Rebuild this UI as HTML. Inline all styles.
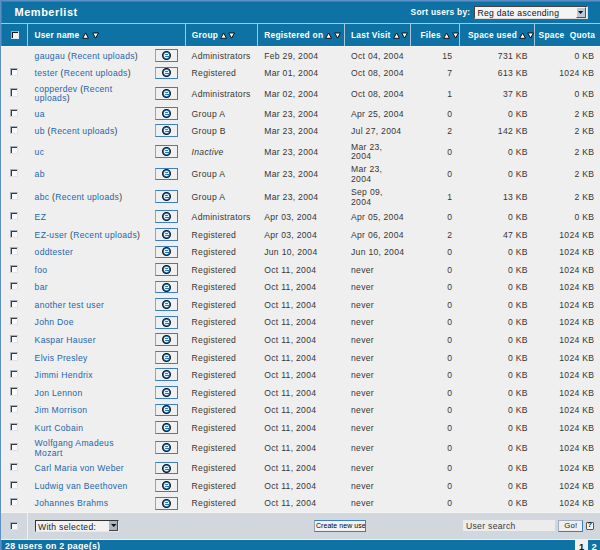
<!DOCTYPE html>
<html><head><meta charset="utf-8"><style>
html,body{margin:0;padding:0;width:600px;height:550px;overflow:hidden;background:#efefef;position:relative}
body{font-family:"Liberation Sans",sans-serif;}
div,svg{position:absolute}
.t{font-size:8.6px;line-height:9.8px;color:#363636;white-space:nowrap;letter-spacing:0.3px}
.l{font-size:8.6px;line-height:9.8px;color:#2465ab;white-space:nowrap;letter-spacing:0.3px}
.l .p{color:#363636}
.h{font-size:8.4px;line-height:9.8px;color:#fff;font-weight:bold;white-space:nowrap;letter-spacing:0.25px}
.eb{left:154.75px;width:21.25px;height:10.75px;border:1px solid #3d7dc3;border-left-color:#8ea6be;background:#f0f0f0}
.cb{width:6px;height:6.2px;border-top:1px solid #a2b0c0;border-left:1px solid #a2b0c0;border-right:0.8px solid #dfe3e8;border-bottom:0.8px solid #dfe3e8;background:#fbfbfb;box-shadow:inset 1px 1px 0 #3a3a3a}
</style></head><body>
<div style="left:0;top:0;width:600px;height:550px;background:#efefef"></div>
<div style="left:0;top:0;width:600px;height:24px;background:#0e72a4"></div>
<div style="left:0;top:0;width:600px;height:1px;background:#5b8fc6"></div>
<div style="left:0;top:1px;width:600px;height:1px;background:#3a80b8"></div>
<div class="h" style="left:14.6px;top:5.6px;font-size:11px;line-height:13px;letter-spacing:0.5px">Memberlist</div>
<div class="h" style="left:410.6px;top:7.5px">Sort users by:</div>
<div style="left:474.2px;top:6px;width:111.8px;height:11px;background:#f4f4f4;border-top:1px solid #444;border-left:1px solid #444;border-right:1px solid #ddd;border-bottom:1px solid #ddd"></div>
<div class="t" style="left:477.4px;top:8.7px;color:#111">Reg date ascending</div>
<div style="left:575.6px;top:7px;width:8.4px;height:8.8px;background:#bcc8d4;border-left:0.8px solid #f4f4f4;border-top:0.8px solid #f4f4f4;border-right:1.2px solid #555;border-bottom:1.2px solid #555"></div>
<svg style="left:577.9px;top:10.5px" width="6" height="4" viewBox="0 0 6 4"><polygon points="0,0 5.2,0 2.6,3" fill="#111"/></svg>
<div style="left:0;top:23px;width:600px;height:23px;background:#0e72a4"></div>
<div style="left:1px;top:23.2px;width:599px;height:1px;background:#a9c5dc"></div>
<div style="left:1px;top:45.7px;width:599px;height:1px;background:#f6f6f6"></div>
<div style="left:26.50px;top:24px;width:1px;height:21.8px;background:#a9c5dc"></div>
<div style="left:184.50px;top:24px;width:1px;height:21.8px;background:#a9c5dc"></div>
<div style="left:257.00px;top:24px;width:1px;height:21.8px;background:#a9c5dc"></div>
<div style="left:344.00px;top:24px;width:1px;height:21.8px;background:#a9c5dc"></div>
<div style="left:410.00px;top:24px;width:1px;height:21.8px;background:#a9c5dc"></div>
<div style="left:459.00px;top:24px;width:1px;height:21.8px;background:#a9c5dc"></div>
<div style="left:534.20px;top:24px;width:1px;height:21.8px;background:#a9c5dc"></div>
<div style="left:10.5px;top:30.8px;width:6.7px;height:6.6px;background:#f2f2f2;border-top:1px solid #8fb0cc;border-left:1px solid #8fb0cc;border-right:0.8px solid #e4e8ec;border-bottom:0.8px solid #e4e8ec;box-shadow:inset 1px 1px 0 #1c1c1c"></div>
<div class="h" style="left:34.40px;top:30.90px">User name</div>
<svg style="left:82.40px;top:32.4px" width="7.2" height="7.2" viewBox="0 0 7.2 7.2"><polygon points="3.6,1 6.5,6.3 0.7,6.3" fill="#fff" stroke="#111" stroke-width="1"/></svg>
<svg style="left:91.70px;top:31.6px" width="7.2" height="7.2" viewBox="0 0 7.2 7.2"><polygon points="0.7,1 6.5,1 3.6,6.1" fill="#fff" stroke="#111" stroke-width="1"/></svg>
<div class="h" style="left:191.80px;top:30.90px">Group</div>
<svg style="left:219.70px;top:32.4px" width="7.2" height="7.2" viewBox="0 0 7.2 7.2"><polygon points="3.6,1 6.5,6.3 0.7,6.3" fill="#fff" stroke="#111" stroke-width="1"/></svg>
<svg style="left:228.40px;top:31.6px" width="7.2" height="7.2" viewBox="0 0 7.2 7.2"><polygon points="0.7,1 6.5,1 3.6,6.1" fill="#fff" stroke="#111" stroke-width="1"/></svg>
<div class="h" style="left:264.20px;top:30.90px">Registered on</div>
<svg style="left:325.40px;top:32.4px" width="7.2" height="7.2" viewBox="0 0 7.2 7.2"><polygon points="3.6,1 6.5,6.3 0.7,6.3" fill="#fff" stroke="#111" stroke-width="1"/></svg>
<svg style="left:334.40px;top:31.6px" width="7.2" height="7.2" viewBox="0 0 7.2 7.2"><polygon points="0.7,1 6.5,1 3.6,6.1" fill="#fff" stroke="#111" stroke-width="1"/></svg>
<div class="h" style="left:351.00px;top:30.90px">Last Visit</div>
<svg style="left:392.50px;top:32.4px" width="7.2" height="7.2" viewBox="0 0 7.2 7.2"><polygon points="3.6,1 6.5,6.3 0.7,6.3" fill="#fff" stroke="#111" stroke-width="1"/></svg>
<svg style="left:401.40px;top:31.6px" width="7.2" height="7.2" viewBox="0 0 7.2 7.2"><polygon points="0.7,1 6.5,1 3.6,6.1" fill="#fff" stroke="#111" stroke-width="1"/></svg>
<div class="h" style="left:420.50px;top:30.90px">Files</div>
<svg style="left:442.80px;top:32.4px" width="7.2" height="7.2" viewBox="0 0 7.2 7.2"><polygon points="3.6,1 6.5,6.3 0.7,6.3" fill="#fff" stroke="#111" stroke-width="1"/></svg>
<svg style="left:451.50px;top:31.6px" width="7.2" height="7.2" viewBox="0 0 7.2 7.2"><polygon points="0.7,1 6.5,1 3.6,6.1" fill="#fff" stroke="#111" stroke-width="1"/></svg>
<div class="h" style="left:468.00px;top:30.90px">Space used</div>
<svg style="left:518.70px;top:32.4px" width="7.2" height="7.2" viewBox="0 0 7.2 7.2"><polygon points="3.6,1 6.5,6.3 0.7,6.3" fill="#fff" stroke="#111" stroke-width="1"/></svg>
<svg style="left:526.70px;top:31.6px" width="7.2" height="7.2" viewBox="0 0 7.2 7.2"><polygon points="0.7,1 6.5,1 3.6,6.1" fill="#fff" stroke="#111" stroke-width="1"/></svg>
<div class="h" style="left:538.60px;top:30.90px">Space&nbsp;&nbsp;Quota</div>
<div class="l" style="left:34.60px;top:51.80px;">gaugau <span class="p">(</span>Recent uploads<span class="p">)</span></div>
<div class="eb" style="top:49.10px"></div>
<svg style="left:161px;top:50px" width="11" height="11" viewBox="0 0 11 11"><circle cx="5.5" cy="5.5" r="3.95" fill="#1a7ac4" stroke="#0d1824" stroke-width="1.1"/><ellipse cx="5.5" cy="5.5" rx="2.6" ry="2.8" fill="#eef4fa"/><rect x="4.1" y="4" width="2.8" height="1" fill="#2273b8"/><rect x="4.1" y="6" width="4.4" height="1" fill="#2273b8"/></svg>
<div class="t" style="left:191.60px;top:51.80px;">Administrators</div>
<div class="t" style="left:264.20px;top:51.80px;">Feb 29, 2004</div>
<div class="t" style="left:351.00px;top:51.80px;">Oct 04, 2004</div>
<div class="t" style="right:147.70px;top:51.80px;text-align:right;">15</div>
<div class="t" style="right:72.20px;top:51.80px;text-align:right;">731 KB</div>
<div class="t" style="right:5.70px;top:51.80px;text-align:right;">0 KB</div>
<div class="cb" style="left:10.1px;top:68.00px"></div>
<div class="l" style="left:34.60px;top:69.20px;">tester <span class="p">(</span>Recent uploads<span class="p">)</span></div>
<div class="eb" style="top:66.50px"></div>
<svg style="left:161px;top:67px" width="11" height="11" viewBox="0 0 11 11"><circle cx="5.5" cy="5.5" r="3.95" fill="#1a7ac4" stroke="#0d1824" stroke-width="1.1"/><ellipse cx="5.5" cy="5.5" rx="2.6" ry="2.8" fill="#eef4fa"/><rect x="4.1" y="4" width="2.8" height="1" fill="#2273b8"/><rect x="4.1" y="6" width="4.4" height="1" fill="#2273b8"/></svg>
<div class="t" style="left:191.60px;top:69.20px;">Registered</div>
<div class="t" style="left:264.20px;top:69.20px;">Mar 01, 2004</div>
<div class="t" style="left:351.00px;top:69.20px;">Oct 08, 2004</div>
<div class="t" style="right:147.70px;top:69.20px;text-align:right;">7</div>
<div class="t" style="right:72.20px;top:69.20px;text-align:right;">613 KB</div>
<div class="t" style="right:5.70px;top:69.20px;text-align:right;">1024 KB</div>
<div class="cb" style="left:10.1px;top:88.40px"></div>
<div class="l" style="left:34.60px;top:84.70px;">copperdev <span class="p">(</span>Recent<br>uploads<span class="p">)</span></div>
<div class="eb" style="top:86.90px"></div>
<svg style="left:161px;top:88px" width="11" height="11" viewBox="0 0 11 11"><circle cx="5.5" cy="5.5" r="3.95" fill="#1a7ac4" stroke="#0d1824" stroke-width="1.1"/><ellipse cx="5.5" cy="5.5" rx="2.6" ry="2.8" fill="#eef4fa"/><rect x="4.1" y="4" width="2.8" height="1" fill="#2273b8"/><rect x="4.1" y="6" width="4.4" height="1" fill="#2273b8"/></svg>
<div class="t" style="left:191.60px;top:89.60px;">Administrators</div>
<div class="t" style="left:264.20px;top:89.60px;">Mar 02, 2004</div>
<div class="t" style="left:351.00px;top:89.60px;">Oct 08, 2004</div>
<div class="t" style="right:147.70px;top:89.60px;text-align:right;">1</div>
<div class="t" style="right:72.20px;top:89.60px;text-align:right;">37 KB</div>
<div class="t" style="right:5.70px;top:89.60px;text-align:right;">0 KB</div>
<div class="cb" style="left:10.1px;top:108.60px"></div>
<div class="l" style="left:34.60px;top:109.80px;">ua</div>
<div class="eb" style="top:107.10px"></div>
<svg style="left:161px;top:108px" width="11" height="11" viewBox="0 0 11 11"><circle cx="5.5" cy="5.5" r="3.95" fill="#1a7ac4" stroke="#0d1824" stroke-width="1.1"/><ellipse cx="5.5" cy="5.5" rx="2.6" ry="2.8" fill="#eef4fa"/><rect x="4.1" y="4" width="2.8" height="1" fill="#2273b8"/><rect x="4.1" y="6" width="4.4" height="1" fill="#2273b8"/></svg>
<div class="t" style="left:191.60px;top:109.80px;">Group A</div>
<div class="t" style="left:264.20px;top:109.80px;">Mar 23, 2004</div>
<div class="t" style="left:351.00px;top:109.80px;">Apr 25, 2004</div>
<div class="t" style="right:147.70px;top:109.80px;text-align:right;">0</div>
<div class="t" style="right:72.20px;top:109.80px;text-align:right;">0 KB</div>
<div class="t" style="right:5.70px;top:109.80px;text-align:right;">2 KB</div>
<div class="cb" style="left:10.1px;top:125.90px"></div>
<div class="l" style="left:34.60px;top:127.10px;">ub <span class="p">(</span>Recent uploads<span class="p">)</span></div>
<div class="eb" style="top:124.40px"></div>
<svg style="left:161px;top:125px" width="11" height="11" viewBox="0 0 11 11"><circle cx="5.5" cy="5.5" r="3.95" fill="#1a7ac4" stroke="#0d1824" stroke-width="1.1"/><ellipse cx="5.5" cy="5.5" rx="2.6" ry="2.8" fill="#eef4fa"/><rect x="4.1" y="4" width="2.8" height="1" fill="#2273b8"/><rect x="4.1" y="6" width="4.4" height="1" fill="#2273b8"/></svg>
<div class="t" style="left:191.60px;top:127.10px;">Group B</div>
<div class="t" style="left:264.20px;top:127.10px;">Mar 23, 2004</div>
<div class="t" style="left:351.00px;top:127.10px;">Jul 27, 2004</div>
<div class="t" style="right:147.70px;top:127.10px;text-align:right;">2</div>
<div class="t" style="right:72.20px;top:127.10px;text-align:right;">142 KB</div>
<div class="t" style="right:5.70px;top:127.10px;text-align:right;">2 KB</div>
<div class="cb" style="left:10.1px;top:146.30px"></div>
<div class="l" style="left:34.60px;top:147.50px;">uc</div>
<div class="eb" style="top:144.80px"></div>
<svg style="left:161px;top:146px" width="11" height="11" viewBox="0 0 11 11"><circle cx="5.5" cy="5.5" r="3.95" fill="#1a7ac4" stroke="#0d1824" stroke-width="1.1"/><ellipse cx="5.5" cy="5.5" rx="2.6" ry="2.8" fill="#eef4fa"/><rect x="4.1" y="4" width="2.8" height="1" fill="#2273b8"/><rect x="4.1" y="6" width="4.4" height="1" fill="#2273b8"/></svg>
<div class="t" style="left:191.60px;top:147.50px;"><i>Inactive</i></div>
<div class="t" style="left:264.20px;top:147.50px;">Mar 23, 2004</div>
<div class="t" style="left:351.00px;top:142.60px;">Mar 23,<br>2004</div>
<div class="t" style="right:147.70px;top:147.50px;text-align:right;">0</div>
<div class="t" style="right:72.20px;top:147.50px;text-align:right;">0 KB</div>
<div class="t" style="right:5.70px;top:147.50px;text-align:right;">2 KB</div>
<div class="cb" style="left:10.1px;top:169.00px"></div>
<div class="l" style="left:34.60px;top:170.20px;">ab</div>
<div class="eb" style="top:167.50px"></div>
<svg style="left:161px;top:168px" width="11" height="11" viewBox="0 0 11 11"><circle cx="5.5" cy="5.5" r="3.95" fill="#1a7ac4" stroke="#0d1824" stroke-width="1.1"/><ellipse cx="5.5" cy="5.5" rx="2.6" ry="2.8" fill="#eef4fa"/><rect x="4.1" y="4" width="2.8" height="1" fill="#2273b8"/><rect x="4.1" y="6" width="4.4" height="1" fill="#2273b8"/></svg>
<div class="t" style="left:191.60px;top:170.20px;">Group A</div>
<div class="t" style="left:264.20px;top:170.20px;">Mar 23, 2004</div>
<div class="t" style="left:351.00px;top:165.30px;">Mar 23,<br>2004</div>
<div class="t" style="right:147.70px;top:170.20px;text-align:right;">0</div>
<div class="t" style="right:72.20px;top:170.20px;text-align:right;">0 KB</div>
<div class="t" style="right:5.70px;top:170.20px;text-align:right;">2 KB</div>
<div class="cb" style="left:10.1px;top:191.70px"></div>
<div class="l" style="left:34.60px;top:192.90px;">abc <span class="p">(</span>Recent uploads<span class="p">)</span></div>
<div class="eb" style="top:190.20px"></div>
<svg style="left:161px;top:191px" width="11" height="11" viewBox="0 0 11 11"><circle cx="5.5" cy="5.5" r="3.95" fill="#1a7ac4" stroke="#0d1824" stroke-width="1.1"/><ellipse cx="5.5" cy="5.5" rx="2.6" ry="2.8" fill="#eef4fa"/><rect x="4.1" y="4" width="2.8" height="1" fill="#2273b8"/><rect x="4.1" y="6" width="4.4" height="1" fill="#2273b8"/></svg>
<div class="t" style="left:191.60px;top:192.90px;">Group A</div>
<div class="t" style="left:264.20px;top:192.90px;">Mar 23, 2004</div>
<div class="t" style="left:351.00px;top:188.00px;">Sep 09,<br>2004</div>
<div class="t" style="right:147.70px;top:192.90px;text-align:right;">1</div>
<div class="t" style="right:72.20px;top:192.90px;text-align:right;">13 KB</div>
<div class="t" style="right:5.70px;top:192.90px;text-align:right;">2 KB</div>
<div class="cb" style="left:10.1px;top:211.70px"></div>
<div class="l" style="left:34.60px;top:212.90px;">EZ</div>
<div class="eb" style="top:210.20px"></div>
<svg style="left:161px;top:211px" width="11" height="11" viewBox="0 0 11 11"><circle cx="5.5" cy="5.5" r="3.95" fill="#1a7ac4" stroke="#0d1824" stroke-width="1.1"/><ellipse cx="5.5" cy="5.5" rx="2.6" ry="2.8" fill="#eef4fa"/><rect x="4.1" y="4" width="2.8" height="1" fill="#2273b8"/><rect x="4.1" y="6" width="4.4" height="1" fill="#2273b8"/></svg>
<div class="t" style="left:191.60px;top:212.90px;">Administrators</div>
<div class="t" style="left:264.20px;top:212.90px;">Apr 03, 2004</div>
<div class="t" style="left:351.00px;top:212.90px;">Apr 05, 2004</div>
<div class="t" style="right:147.70px;top:212.90px;text-align:right;">0</div>
<div class="t" style="right:72.20px;top:212.90px;text-align:right;">0 KB</div>
<div class="t" style="right:5.70px;top:212.90px;text-align:right;">0 KB</div>
<div class="cb" style="left:10.1px;top:229.50px"></div>
<div class="l" style="left:34.60px;top:230.70px;">EZ-user <span class="p">(</span>Recent uploads<span class="p">)</span></div>
<div class="eb" style="top:228.00px"></div>
<svg style="left:161px;top:229px" width="11" height="11" viewBox="0 0 11 11"><circle cx="5.5" cy="5.5" r="3.95" fill="#1a7ac4" stroke="#0d1824" stroke-width="1.1"/><ellipse cx="5.5" cy="5.5" rx="2.6" ry="2.8" fill="#eef4fa"/><rect x="4.1" y="4" width="2.8" height="1" fill="#2273b8"/><rect x="4.1" y="6" width="4.4" height="1" fill="#2273b8"/></svg>
<div class="t" style="left:191.60px;top:230.70px;">Registered</div>
<div class="t" style="left:264.20px;top:230.70px;">Apr 03, 2004</div>
<div class="t" style="left:351.00px;top:230.70px;">Apr 06, 2004</div>
<div class="t" style="right:147.70px;top:230.70px;text-align:right;">2</div>
<div class="t" style="right:72.20px;top:230.70px;text-align:right;">47 KB</div>
<div class="t" style="right:5.70px;top:230.70px;text-align:right;">1024 KB</div>
<div class="cb" style="left:10.1px;top:247.05px"></div>
<div class="l" style="left:34.60px;top:248.25px;">oddtester</div>
<div class="eb" style="top:245.55px"></div>
<svg style="left:161px;top:246px" width="11" height="11" viewBox="0 0 11 11"><circle cx="5.5" cy="5.5" r="3.95" fill="#1a7ac4" stroke="#0d1824" stroke-width="1.1"/><ellipse cx="5.5" cy="5.5" rx="2.6" ry="2.8" fill="#eef4fa"/><rect x="4.1" y="4" width="2.8" height="1" fill="#2273b8"/><rect x="4.1" y="6" width="4.4" height="1" fill="#2273b8"/></svg>
<div class="t" style="left:191.60px;top:248.25px;">Registered</div>
<div class="t" style="left:264.20px;top:248.25px;">Jun 10, 2004</div>
<div class="t" style="left:351.00px;top:248.25px;">Jun 10, 2004</div>
<div class="t" style="right:147.70px;top:248.25px;text-align:right;">0</div>
<div class="t" style="right:72.20px;top:248.25px;text-align:right;">0 KB</div>
<div class="t" style="right:5.70px;top:248.25px;text-align:right;">1024 KB</div>
<div class="cb" style="left:10.1px;top:264.60px"></div>
<div class="l" style="left:34.60px;top:265.80px;">foo</div>
<div class="eb" style="top:263.10px"></div>
<svg style="left:161px;top:264px" width="11" height="11" viewBox="0 0 11 11"><circle cx="5.5" cy="5.5" r="3.95" fill="#1a7ac4" stroke="#0d1824" stroke-width="1.1"/><ellipse cx="5.5" cy="5.5" rx="2.6" ry="2.8" fill="#eef4fa"/><rect x="4.1" y="4" width="2.8" height="1" fill="#2273b8"/><rect x="4.1" y="6" width="4.4" height="1" fill="#2273b8"/></svg>
<div class="t" style="left:191.60px;top:265.80px;">Registered</div>
<div class="t" style="left:264.20px;top:265.80px;">Oct 11, 2004</div>
<div class="t" style="left:351.00px;top:265.80px;">never</div>
<div class="t" style="right:147.70px;top:265.80px;text-align:right;">0</div>
<div class="t" style="right:72.20px;top:265.80px;text-align:right;">0 KB</div>
<div class="t" style="right:5.70px;top:265.80px;text-align:right;">1024 KB</div>
<div class="cb" style="left:10.1px;top:282.15px"></div>
<div class="l" style="left:34.60px;top:283.35px;">bar</div>
<div class="eb" style="top:280.65px"></div>
<svg style="left:161px;top:282px" width="11" height="11" viewBox="0 0 11 11"><circle cx="5.5" cy="5.5" r="3.95" fill="#1a7ac4" stroke="#0d1824" stroke-width="1.1"/><ellipse cx="5.5" cy="5.5" rx="2.6" ry="2.8" fill="#eef4fa"/><rect x="4.1" y="4" width="2.8" height="1" fill="#2273b8"/><rect x="4.1" y="6" width="4.4" height="1" fill="#2273b8"/></svg>
<div class="t" style="left:191.60px;top:283.35px;">Registered</div>
<div class="t" style="left:264.20px;top:283.35px;">Oct 11, 2004</div>
<div class="t" style="left:351.00px;top:283.35px;">never</div>
<div class="t" style="right:147.70px;top:283.35px;text-align:right;">0</div>
<div class="t" style="right:72.20px;top:283.35px;text-align:right;">0 KB</div>
<div class="t" style="right:5.70px;top:283.35px;text-align:right;">1024 KB</div>
<div class="cb" style="left:10.1px;top:299.70px"></div>
<div class="l" style="left:34.60px;top:300.90px;">another test user</div>
<div class="eb" style="top:298.20px"></div>
<svg style="left:161px;top:299px" width="11" height="11" viewBox="0 0 11 11"><circle cx="5.5" cy="5.5" r="3.95" fill="#1a7ac4" stroke="#0d1824" stroke-width="1.1"/><ellipse cx="5.5" cy="5.5" rx="2.6" ry="2.8" fill="#eef4fa"/><rect x="4.1" y="4" width="2.8" height="1" fill="#2273b8"/><rect x="4.1" y="6" width="4.4" height="1" fill="#2273b8"/></svg>
<div class="t" style="left:191.60px;top:300.90px;">Registered</div>
<div class="t" style="left:264.20px;top:300.90px;">Oct 11, 2004</div>
<div class="t" style="left:351.00px;top:300.90px;">never</div>
<div class="t" style="right:147.70px;top:300.90px;text-align:right;">0</div>
<div class="t" style="right:72.20px;top:300.90px;text-align:right;">0 KB</div>
<div class="t" style="right:5.70px;top:300.90px;text-align:right;">1024 KB</div>
<div class="cb" style="left:10.1px;top:317.25px"></div>
<div class="l" style="left:34.60px;top:318.45px;">John Doe</div>
<div class="eb" style="top:315.75px"></div>
<svg style="left:161px;top:317px" width="11" height="11" viewBox="0 0 11 11"><circle cx="5.5" cy="5.5" r="3.95" fill="#1a7ac4" stroke="#0d1824" stroke-width="1.1"/><ellipse cx="5.5" cy="5.5" rx="2.6" ry="2.8" fill="#eef4fa"/><rect x="4.1" y="4" width="2.8" height="1" fill="#2273b8"/><rect x="4.1" y="6" width="4.4" height="1" fill="#2273b8"/></svg>
<div class="t" style="left:191.60px;top:318.45px;">Registered</div>
<div class="t" style="left:264.20px;top:318.45px;">Oct 11, 2004</div>
<div class="t" style="left:351.00px;top:318.45px;">never</div>
<div class="t" style="right:147.70px;top:318.45px;text-align:right;">0</div>
<div class="t" style="right:72.20px;top:318.45px;text-align:right;">0 KB</div>
<div class="t" style="right:5.70px;top:318.45px;text-align:right;">1024 KB</div>
<div class="cb" style="left:10.1px;top:334.80px"></div>
<div class="l" style="left:34.60px;top:336.00px;">Kaspar Hauser</div>
<div class="eb" style="top:333.30px"></div>
<svg style="left:161px;top:334px" width="11" height="11" viewBox="0 0 11 11"><circle cx="5.5" cy="5.5" r="3.95" fill="#1a7ac4" stroke="#0d1824" stroke-width="1.1"/><ellipse cx="5.5" cy="5.5" rx="2.6" ry="2.8" fill="#eef4fa"/><rect x="4.1" y="4" width="2.8" height="1" fill="#2273b8"/><rect x="4.1" y="6" width="4.4" height="1" fill="#2273b8"/></svg>
<div class="t" style="left:191.60px;top:336.00px;">Registered</div>
<div class="t" style="left:264.20px;top:336.00px;">Oct 11, 2004</div>
<div class="t" style="left:351.00px;top:336.00px;">never</div>
<div class="t" style="right:147.70px;top:336.00px;text-align:right;">0</div>
<div class="t" style="right:72.20px;top:336.00px;text-align:right;">0 KB</div>
<div class="t" style="right:5.70px;top:336.00px;text-align:right;">1024 KB</div>
<div class="cb" style="left:10.1px;top:352.35px"></div>
<div class="l" style="left:34.60px;top:353.55px;">Elvis Presley</div>
<div class="eb" style="top:350.85px"></div>
<svg style="left:161px;top:352px" width="11" height="11" viewBox="0 0 11 11"><circle cx="5.5" cy="5.5" r="3.95" fill="#1a7ac4" stroke="#0d1824" stroke-width="1.1"/><ellipse cx="5.5" cy="5.5" rx="2.6" ry="2.8" fill="#eef4fa"/><rect x="4.1" y="4" width="2.8" height="1" fill="#2273b8"/><rect x="4.1" y="6" width="4.4" height="1" fill="#2273b8"/></svg>
<div class="t" style="left:191.60px;top:353.55px;">Registered</div>
<div class="t" style="left:264.20px;top:353.55px;">Oct 11, 2004</div>
<div class="t" style="left:351.00px;top:353.55px;">never</div>
<div class="t" style="right:147.70px;top:353.55px;text-align:right;">0</div>
<div class="t" style="right:72.20px;top:353.55px;text-align:right;">0 KB</div>
<div class="t" style="right:5.70px;top:353.55px;text-align:right;">1024 KB</div>
<div class="cb" style="left:10.1px;top:369.90px"></div>
<div class="l" style="left:34.60px;top:371.10px;">Jimmi Hendrix</div>
<div class="eb" style="top:368.40px"></div>
<svg style="left:161px;top:369px" width="11" height="11" viewBox="0 0 11 11"><circle cx="5.5" cy="5.5" r="3.95" fill="#1a7ac4" stroke="#0d1824" stroke-width="1.1"/><ellipse cx="5.5" cy="5.5" rx="2.6" ry="2.8" fill="#eef4fa"/><rect x="4.1" y="4" width="2.8" height="1" fill="#2273b8"/><rect x="4.1" y="6" width="4.4" height="1" fill="#2273b8"/></svg>
<div class="t" style="left:191.60px;top:371.10px;">Registered</div>
<div class="t" style="left:264.20px;top:371.10px;">Oct 11, 2004</div>
<div class="t" style="left:351.00px;top:371.10px;">never</div>
<div class="t" style="right:147.70px;top:371.10px;text-align:right;">0</div>
<div class="t" style="right:72.20px;top:371.10px;text-align:right;">0 KB</div>
<div class="t" style="right:5.70px;top:371.10px;text-align:right;">1024 KB</div>
<div class="cb" style="left:10.1px;top:387.45px"></div>
<div class="l" style="left:34.60px;top:388.65px;">Jon Lennon</div>
<div class="eb" style="top:385.95px"></div>
<svg style="left:161px;top:387px" width="11" height="11" viewBox="0 0 11 11"><circle cx="5.5" cy="5.5" r="3.95" fill="#1a7ac4" stroke="#0d1824" stroke-width="1.1"/><ellipse cx="5.5" cy="5.5" rx="2.6" ry="2.8" fill="#eef4fa"/><rect x="4.1" y="4" width="2.8" height="1" fill="#2273b8"/><rect x="4.1" y="6" width="4.4" height="1" fill="#2273b8"/></svg>
<div class="t" style="left:191.60px;top:388.65px;">Registered</div>
<div class="t" style="left:264.20px;top:388.65px;">Oct 11, 2004</div>
<div class="t" style="left:351.00px;top:388.65px;">never</div>
<div class="t" style="right:147.70px;top:388.65px;text-align:right;">0</div>
<div class="t" style="right:72.20px;top:388.65px;text-align:right;">0 KB</div>
<div class="t" style="right:5.70px;top:388.65px;text-align:right;">1024 KB</div>
<div class="cb" style="left:10.1px;top:405.00px"></div>
<div class="l" style="left:34.60px;top:406.20px;">Jim Morrison</div>
<div class="eb" style="top:403.50px"></div>
<svg style="left:161px;top:404px" width="11" height="11" viewBox="0 0 11 11"><circle cx="5.5" cy="5.5" r="3.95" fill="#1a7ac4" stroke="#0d1824" stroke-width="1.1"/><ellipse cx="5.5" cy="5.5" rx="2.6" ry="2.8" fill="#eef4fa"/><rect x="4.1" y="4" width="2.8" height="1" fill="#2273b8"/><rect x="4.1" y="6" width="4.4" height="1" fill="#2273b8"/></svg>
<div class="t" style="left:191.60px;top:406.20px;">Registered</div>
<div class="t" style="left:264.20px;top:406.20px;">Oct 11, 2004</div>
<div class="t" style="left:351.00px;top:406.20px;">never</div>
<div class="t" style="right:147.70px;top:406.20px;text-align:right;">0</div>
<div class="t" style="right:72.20px;top:406.20px;text-align:right;">0 KB</div>
<div class="t" style="right:5.70px;top:406.20px;text-align:right;">1024 KB</div>
<div class="cb" style="left:10.1px;top:422.55px"></div>
<div class="l" style="left:34.60px;top:423.75px;">Kurt Cobain</div>
<div class="eb" style="top:421.05px"></div>
<svg style="left:161px;top:422px" width="11" height="11" viewBox="0 0 11 11"><circle cx="5.5" cy="5.5" r="3.95" fill="#1a7ac4" stroke="#0d1824" stroke-width="1.1"/><ellipse cx="5.5" cy="5.5" rx="2.6" ry="2.8" fill="#eef4fa"/><rect x="4.1" y="4" width="2.8" height="1" fill="#2273b8"/><rect x="4.1" y="6" width="4.4" height="1" fill="#2273b8"/></svg>
<div class="t" style="left:191.60px;top:423.75px;">Registered</div>
<div class="t" style="left:264.20px;top:423.75px;">Oct 11, 2004</div>
<div class="t" style="left:351.00px;top:423.75px;">never</div>
<div class="t" style="right:147.70px;top:423.75px;text-align:right;">0</div>
<div class="t" style="right:72.20px;top:423.75px;text-align:right;">0 KB</div>
<div class="t" style="right:5.70px;top:423.75px;text-align:right;">1024 KB</div>
<div class="cb" style="left:10.1px;top:442.85px"></div>
<div class="l" style="left:34.60px;top:439.15px;">Wolfgang Amadeus<br>Mozart</div>
<div class="eb" style="top:441.35px"></div>
<svg style="left:161px;top:442px" width="11" height="11" viewBox="0 0 11 11"><circle cx="5.5" cy="5.5" r="3.95" fill="#1a7ac4" stroke="#0d1824" stroke-width="1.1"/><ellipse cx="5.5" cy="5.5" rx="2.6" ry="2.8" fill="#eef4fa"/><rect x="4.1" y="4" width="2.8" height="1" fill="#2273b8"/><rect x="4.1" y="6" width="4.4" height="1" fill="#2273b8"/></svg>
<div class="t" style="left:191.60px;top:444.05px;">Registered</div>
<div class="t" style="left:264.20px;top:444.05px;">Oct 11, 2004</div>
<div class="t" style="left:351.00px;top:444.05px;">never</div>
<div class="t" style="right:147.70px;top:444.05px;text-align:right;">0</div>
<div class="t" style="right:72.20px;top:444.05px;text-align:right;">0 KB</div>
<div class="t" style="right:5.70px;top:444.05px;text-align:right;">1024 KB</div>
<div class="cb" style="left:10.1px;top:463.15px"></div>
<div class="l" style="left:34.60px;top:464.35px;">Carl Maria von Weber</div>
<div class="eb" style="top:461.65px"></div>
<svg style="left:161px;top:463px" width="11" height="11" viewBox="0 0 11 11"><circle cx="5.5" cy="5.5" r="3.95" fill="#1a7ac4" stroke="#0d1824" stroke-width="1.1"/><ellipse cx="5.5" cy="5.5" rx="2.6" ry="2.8" fill="#eef4fa"/><rect x="4.1" y="4" width="2.8" height="1" fill="#2273b8"/><rect x="4.1" y="6" width="4.4" height="1" fill="#2273b8"/></svg>
<div class="t" style="left:191.60px;top:464.35px;">Registered</div>
<div class="t" style="left:264.20px;top:464.35px;">Oct 11, 2004</div>
<div class="t" style="left:351.00px;top:464.35px;">never</div>
<div class="t" style="right:147.70px;top:464.35px;text-align:right;">0</div>
<div class="t" style="right:72.20px;top:464.35px;text-align:right;">0 KB</div>
<div class="t" style="right:5.70px;top:464.35px;text-align:right;">1024 KB</div>
<div class="cb" style="left:10.1px;top:480.70px"></div>
<div class="l" style="left:34.60px;top:481.90px;">Ludwig van Beethoven</div>
<div class="eb" style="top:479.20px"></div>
<svg style="left:161px;top:480px" width="11" height="11" viewBox="0 0 11 11"><circle cx="5.5" cy="5.5" r="3.95" fill="#1a7ac4" stroke="#0d1824" stroke-width="1.1"/><ellipse cx="5.5" cy="5.5" rx="2.6" ry="2.8" fill="#eef4fa"/><rect x="4.1" y="4" width="2.8" height="1" fill="#2273b8"/><rect x="4.1" y="6" width="4.4" height="1" fill="#2273b8"/></svg>
<div class="t" style="left:191.60px;top:481.90px;">Registered</div>
<div class="t" style="left:264.20px;top:481.90px;">Oct 11, 2004</div>
<div class="t" style="left:351.00px;top:481.90px;">never</div>
<div class="t" style="right:147.70px;top:481.90px;text-align:right;">0</div>
<div class="t" style="right:72.20px;top:481.90px;text-align:right;">0 KB</div>
<div class="t" style="right:5.70px;top:481.90px;text-align:right;">1024 KB</div>
<div class="cb" style="left:10.1px;top:498.25px"></div>
<div class="l" style="left:34.60px;top:499.45px;">Johannes Brahms</div>
<div class="eb" style="top:496.75px"></div>
<svg style="left:161px;top:498px" width="11" height="11" viewBox="0 0 11 11"><circle cx="5.5" cy="5.5" r="3.95" fill="#1a7ac4" stroke="#0d1824" stroke-width="1.1"/><ellipse cx="5.5" cy="5.5" rx="2.6" ry="2.8" fill="#eef4fa"/><rect x="4.1" y="4" width="2.8" height="1" fill="#2273b8"/><rect x="4.1" y="6" width="4.4" height="1" fill="#2273b8"/></svg>
<div class="t" style="left:191.60px;top:499.45px;">Registered</div>
<div class="t" style="left:264.20px;top:499.45px;">Oct 11, 2004</div>
<div class="t" style="left:351.00px;top:499.45px;">never</div>
<div class="t" style="right:147.70px;top:499.45px;text-align:right;">0</div>
<div class="t" style="right:72.20px;top:499.45px;text-align:right;">0 KB</div>
<div class="t" style="right:5.70px;top:499.45px;text-align:right;">1024 KB</div>
<div style="left:1px;top:512.9px;width:599px;height:26.4px;background:#d1d7dc"></div>
<div style="left:1px;top:512.3px;width:599px;height:0.6px;background:#f4f4f4"></div>
<div style="left:26.6px;top:512.9px;width:1px;height:26.4px;background:#eef0f2"></div>
<div class="cb" style="left:10.1px;top:521.8px"></div>
<div style="left:35px;top:520.3px;width:82.2px;height:9.9px;background:#f2f2f2;border-top:1px solid #333;border-left:1px solid #333;border-right:1px solid #e8e8e8;border-bottom:1px solid #e8e8e8"></div>
<div class="t" style="left:38px;top:522.6px;color:#222">With selected:</div>
<div style="left:109.2px;top:521.3px;width:8px;height:8.8px;background:#aab6c2;border-right:1px solid #444;border-bottom:1px solid #444"></div>
<svg style="left:110.7px;top:524.3px" width="6" height="4" viewBox="0 0 6 4"><polygon points="0,0 5.5,0 2.75,3" fill="#111"/></svg>
<div style="left:314px;top:519.6px;width:49.5px;height:10.2px;background:#f2f2f2;border:1px solid #3b7cc4;border-left-color:#8aa4be;overflow:hidden"><span style="position:absolute;left:1px;top:1.6px;font-size:6.9px;line-height:8px;color:#000;white-space:nowrap;letter-spacing:0.1px">Create new user</span></div>
<div style="left:463px;top:520.1px;width:92px;height:10.9px;background:#ececec"></div>
<div class="t" style="left:466px;top:522px;color:#3a3a3a">User search</div>
<div style="left:557.8px;top:519.6px;width:23.4px;height:10.4px;background:#efefef;border:1px solid #3b7cc4;border-left-color:#a0b0c0;border-top-color:#a0b0c0"></div>
<div class="t" style="left:564.3px;top:521.3px;color:#222;font-size:7.8px;letter-spacing:0.2px">Go!</div>
<div style="left:585.6px;top:521.6px;width:6.6px;height:6px;background:#f4f4f4;border:1px solid #555;border-radius:1px"></div>
<div style="left:587.4px;top:521.3px;font-size:7.2px;line-height:8px;font-weight:bold;color:#111">?</div>
<div style="left:1px;top:539.2px;width:599px;height:0.5px;background:#eef0f2"></div>
<div style="left:0px;top:539.6px;width:600px;height:11px;background:#0e72a4"></div>
<div style="left:0;top:539px;width:1px;height:11px;background:#5b8fc6"></div>
<div class="h" style="left:5px;top:541.8px;font-size:8.8px;letter-spacing:0.25px">28 users on 2 page(s)</div>
<div style="left:575.2px;top:539.6px;width:12.6px;height:11px;background:#efefef"></div>
<div class="h" style="left:578.9px;top:541.6px;color:#111;font-size:9.4px">1</div>
<div class="h" style="left:591.6px;top:541.6px;color:#fff;font-size:9.4px">2</div>
<div style="left:0;top:0;width:1px;height:550px;background:#5b8fc6"></div>
<div style="left:1px;top:1px;width:1px;height:22px;background:#3a80b8"></div>
<div style="left:1px;top:24px;width:1px;height:21.7px;background:#3a80b8"></div>
<div style="left:1px;top:539.6px;width:1px;height:11px;background:#3a80b8"></div>
</body></html>
